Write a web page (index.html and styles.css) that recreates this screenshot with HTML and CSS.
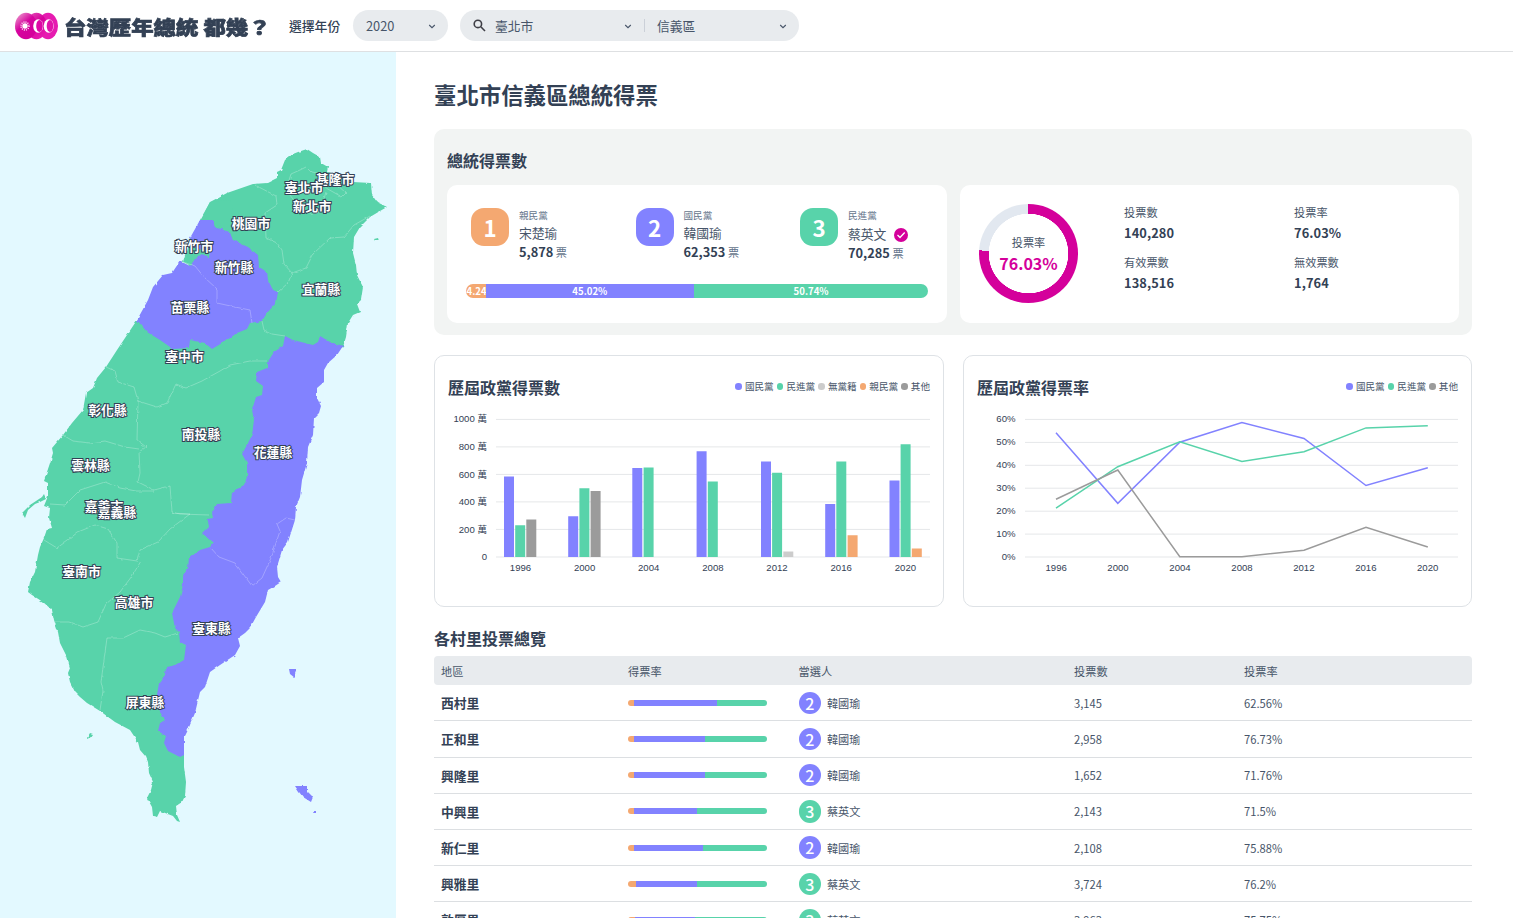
FILE: index.html
```html
<!DOCTYPE html>
<html lang="zh-Hant">
<head>
<meta charset="utf-8">
<title>台灣歷年總統 都幾？</title>
<link rel="stylesheet" href="styles.css">
</head>
<body>
<header class="topbar">
  <svg class="logo" width="44" height="28" viewBox="0 0 44 28">
    <defs>
      <linearGradient id="lg" x1="0" y1="0" x2="0.6" y2="0.8"><stop offset="0" stop-color="#f0b3d4"/><stop offset="0.6" stop-color="#d6059f"/><stop offset="1" stop-color="#d4009b"/></linearGradient>
      <linearGradient id="lg2" x1="0" y1="0" x2="0.6" y2="1"><stop offset="0" stop-color="#e55bb9"/><stop offset="0.5" stop-color="#d6009c"/><stop offset="1" stop-color="#e619ae"/></linearGradient>
    </defs>
    <ellipse cx="33" cy="14" rx="10" ry="13.2" fill="#e61bb0"/>
    <ellipse cx="21.5" cy="14" rx="10.5" ry="13.2" fill="url(#lg2)"/>
    <ellipse cx="11" cy="14" rx="11" ry="13.2" fill="url(#lg)"/>
    <circle cx="10" cy="14" r="2.7" fill="#fff"/>
    <circle cx="10" cy="14" r="4" fill="none" stroke="#fff" stroke-width="1.4" stroke-dasharray="1 1.1"/>
    <ellipse cx="23.200" cy="14" rx="5" ry="6.8" fill="#fff"/><ellipse cx="24.500" cy="14" rx="3.3" ry="6" fill="#dd0aa5"/>
    <ellipse cx="33.700" cy="14" rx="5" ry="6.800" fill="#fff"/><ellipse cx="35" cy="14" rx="3.3" ry="6" fill="#e014aa"/>
  </svg>
  <h1 class="brand">台灣歷年總統 都幾？</h1>
  <span class="year-label">選擇年份</span>
  <div class="pill pill-year"><span>2020</span><svg class="caret" width="8" height="6" viewBox="0 0 8 6"><path d="M1.2 2L4 4.700L6.800 2"/></svg></div>
  <div class="pill pill-area">
    <svg class="search" width="13" height="13" viewBox="0 0 13 13"><circle cx="4.9" cy="4.9" r="3.7"/><path d="M7.8 7.8L12 12"/></svg>
    <div class="area-field city"><span>臺北市</span><svg class="caret" width="8" height="6" viewBox="0 0 8 6"><path d="M1.2 2L4 4.700L6.800 2"/></svg></div>
    <i class="divider"></i>
    <div class="area-field district"><span>信義區</span><svg class="caret" width="8" height="6" viewBox="0 0 8 6"><path d="M1.2 2L4 4.700L6.800 2"/></svg></div>
  </div>
</header>
<div class="layout">
<aside class="map">
<svg width="396" height="866" viewBox="0 52 396 866">
  <defs><filter id="coast" x="0" y="52" width="396" height="866" filterUnits="userSpaceOnUse" color-interpolation-filters="sRGB"><feTurbulence type="fractalNoise" baseFrequency="0.2" numOctaves="1" seed="4"/><feDisplacementMap in="SourceGraphic" scale="3" xChannelSelector="R" yChannelSelector="G"/></filter></defs>
  <g filter="url(#coast)">
  <path class="dpp" d="M298 152L307 149L313 153L320 157L321 163L328 167L327 172L337 174L353 182L371 183L372 195L377 202L387 207L380 211L370 217L360 227L354 237L353 253L356 265L357 275L363 287L361 300L357 304L360 312L353 315L348 323L346 337L343 347L300 370L280 420L260 490L240 560L200 640L180 680L172 735L176 753L184 755L184 767L186 782L185 796L182 802L176 806L177 815L180 822L177 821L173 816L160 811L157 817L153 816L152 807L147 798L151 790L153 782L149 773L148 762L146 757L140 750L138 742L130 730L115 722L100 711L87 703L80 697L75 692L70 682L68 673L70 668L67 657L60 643L58 632L54 620L52 610L43 602L32 595L28 592L30 582L35 572L38 555L40 547L44 538L47 529L52 528L49 518L50 508L44 506L48 496L48 483L44 481L50 463L53 453L52 448L63 435L72 423L83 410L86 393L93 388L97 378L106 367L117 350L137 320L160 305L189 265L183 262L185 255L190 238L200 235L212 230L205 212L210 202L227 193L253 184L267 183L277 178L277 172L281 170L285 160L293 154Z"/>
  <path class="kmt" d="M137 320L148 300L153 287L163 275L172 273L180 261L188 265L190 266L195 259L202 254L209 257L210 252L195 248L190 238L200 220L213 220L215 227L230 232L233 240L248 247L258 255L259 267L267 272L268 280L273 290L278 292L276 303L267 313L262 321L250 323L247 329L237 333L227 340L212 349L205 343L190 340L189 348L173 349L160 340L147 332Z"/>
  <path class="dpp" d="M213 220L200 220L210 202L230 200L240 236L233 240L230 232L215 227Z"/>
  <path class="kmt" d="M343 346L337 355L328 363L324 370L324 382L317 388L317 398L321 406L319 413L314 418L313 435L308 447L307 463L302 480L300 497L296 507L295 520L288 542L282 550L277 567L278 577L281 582L275 586L268 590L265 602L256 617L250 628L245 633L238 638L240 646L235 655L220 665L210 672L205 687L200 692L195 713L187 732L184 738L184 755L180 757L168 751L164 743L166 736L158 731L160 723L165 720L160 712L157 695L159 683L165 675L166 667L175 665L184 660L186 645L180 642L179 632L175 628L172 613L180 597L183 585L183 575L188 568L189 558L200 550L210 547L213 543L202 533L209 526L207 519L213 518L212 513L217 504L231 503L232 492L244 485L247 477L247 463L242 454L247 445L252 435L254 420L252 410L256 397L262 395L263 386L256 381L257 372L267 368L267 363L274 352L283 346L285 336L293 340L313 345L318 342L320 336L330 342Z"/>
  <path class="dpp" d="M22 513L30 505L42 497L44 494L46 499L40 502L35 504L28 510L25 518Z"/>
  <path class="dpp" d="M374 239L378 238L379 241L375 241ZM87 738L90 733L93 734L91 737L87 739Z"/>
  <path class="kmt" d="M289 669L297 669L295 674L295 678L290 674ZM295 786L307 786L307 791L313 797L311 802L303 797L299 792ZM313 811L316 811L316 813L314 813Z"/>
  <path class="edge" d="M255 185L276 196L277 205L265 213L266 238L277 243L282 250L284 264L292 273L306 268L313 254L330 238L344 237L354 225L370 216M291 174L300 170L306 167L311 172L322 174L326 188L342 197L346 193L336 184M291 174L286 190L300 208L312 214L320 212L326 192M292 273L288 283L278 292M262 321L264 330L272 334L285 336M180 261L195 266L204 277L217 289L217 303L235 307L250 310L252 323M106 367L115 371L118 382L134 387L138 401L157 407L167 403L176 384L186 388L202 381L220 371L230 365L250 361L267 361M138 401L137 440L146 447L139 452L140 473L138 482L154 490L170 486L172 512L180 514L209 515M63 435L73 441L90 443L105 441L125 447L139 449M50 504L65 505L80 490L105 482L120 488L136 491L154 491M172 513L190 514L170 529L158 542L140 550L137 561L117 558L117 543L108 529L95 525L78 532L68 540L57 548L44 540M141 561L132 576L120 592L106 604L98 622L83 627L70 622L55 622M210 547L219 557L235 563L252 586L262 578L271 558L280 531L277 524L286 518L295 520M107 638L123 638L140 630L155 633L165 637L178 633M107 638L104 660L101 682L103 691L100 710"/>
  </g>
  <g class="map-labels">
    <text x="335" y="183.500">基隆市</text><text x="304" y="191.500">臺北市</text><text x="312" y="210.500">新北市</text><text x="251" y="227.500">桃園市</text><text x="194" y="250.500">新竹市</text><text x="234" y="271.500">新竹縣</text><text x="321" y="293.500">宜蘭縣</text><text x="190" y="311.500">苗栗縣</text><text x="184.500" y="360.500">臺中市</text><text x="107.500" y="414.500">彰化縣</text><text x="201" y="438.500">南投縣</text><text x="273" y="456.500">花蓮縣</text><text x="90.500" y="469.500">雲林縣</text><text x="104" y="510.500">嘉義市</text><text x="117" y="516.500">嘉義縣</text><text x="81.500" y="575.500">臺南市</text><text x="134" y="606.500">高雄市</text><text x="211.500" y="632.500">臺東縣</text><text x="145" y="706.500">屏東縣</text>
  </g>
</svg>
</aside>
<main class="content">
  <h2 class="page-title">臺北市信義區總統得票</h2>
  <section class="summary">
    <h3 class="section-title">總統得票數</h3>
    <div class="summary-cards">
      <div class="card votes">
        <div class="candidates">
          <div class="candidate"><b class="num tpf">1</b><div class="who"><small>親民黨</small><span class="name">宋楚瑜</span><span class="count"><b>5,878</b> 票</span></div></div>
          <div class="candidate"><b class="num blue">2</b><div class="who"><small>國民黨</small><span class="name">韓國瑜</span><span class="count"><b>62,353</b> 票</span></div></div>
          <div class="candidate"><b class="num green">3</b><div class="who"><small>民進黨</small><span class="name winner">蔡英文<svg width="14" height="14" viewBox="0 0 14 14"><circle cx="7" cy="7" r="7"/><path d="M3.5 7L6 9.500L10.700 4.500"/></svg></span><span class="count"><b>70,285</b> 票</span></div></div>
        </div>
        <div class="ratio"><span class="tpf" style="width:4.24%">4.24%</span><span class="blue" style="width:45.02%">45.02%</span><span class="green" style="width:50.74%">50.74%</span></div>
      </div>
      <div class="card turnout">
        <div class="donut"><span>投票率</span><strong>76.03%</strong></div>
        <dl class="stats">
          <div><dt>投票數</dt><dd>140,280</dd></div><div><dt>投票率</dt><dd>76.03%</dd></div>
          <div><dt>有效票數</dt><dd>138,516</dd></div><div><dt>無效票數</dt><dd>1,764</dd></div>
        </dl>
      </div>
    </div>
  </section>
  <section class="charts">
    <div class="chart-card">
      <div class="chart-head"><h3 class="section-title">歷屆政黨得票數</h3><ul class="legend"><li class="k">國民黨</li><li class="d">民進黨</li><li class="n">無黨籍</li><li class="p">親民黨</li><li class="o">其他</li></ul></div>
      <svg class="chart" width="482" height="170" viewBox="448 410 482 170">
        <path class="grid" d="M496 419.400H930M496 446.900H930M496 474.400H930M496 501.900H930M496 529.400H930M496 557H930"/>
        <g class="y"><text x="487" y="422">1000 萬</text><text x="487" y="450">800 萬</text><text x="487" y="478">600 萬</text><text x="487" y="505">400 萬</text><text x="487" y="533">200 萬</text><text x="487" y="560">0</text></g>
        <path fill="#8282ff" d="M504 476.500h10V557h-10zM568.200 516.200h10V557h-10zM632.300 468h10V557h-10zM696.600 451.200h10V557h-10zM761 461.500h10V557h-10zM825.200 504h10V557h-10zM889.500 480.500h10V557h-10z"/>
        <path fill="#58d3aa" d="M515.200 525.300h10V557h-10zM579.400 488.200h10V557h-10zM643.600 467.500h10V557h-10zM707.800 481.500h10V557h-10zM772.100 472.700h10V557h-10zM836.300 461.500h10V557h-10zM900.600 444.200h10V557h-10z"/>
        <path fill="#9b9b9b" d="M526.300 519.500h10V557h-10zM590.600 491h10V557h-10z"/>
        <path fill="#ccc" d="M783.300 551.500h10V557h-10z"/>
        <path fill="#f4a871" d="M847.600 535.200h10V557h-10zM911.800 548.400h10V557h-10z"/>
        <g class="x"><text x="520.500" y="571">1996</text><text x="584.600" y="571">2000</text><text x="648.700" y="571">2004</text><text x="712.900" y="571">2008</text><text x="777" y="571">2012</text><text x="841.200" y="571">2016</text><text x="905.400" y="571">2020</text></g>
      </svg>
    </div>
    <div class="chart-card">
      <div class="chart-head"><h3 class="section-title">歷屆政黨得票率</h3><ul class="legend"><li class="k">國民黨</li><li class="d">民進黨</li><li class="o">其他</li></ul></div>
      <svg class="chart" width="481" height="170" viewBox="977 410 481 170">
        <path class="grid" d="M1025 419.400H1458M1025 442.400H1458M1025 465.300H1458M1025 488.200H1458M1025 511.200H1458M1025 534.100H1458M1025 557H1458"/>
        <g class="y"><text x="1015.500" y="422">60%</text><text x="1015.500" y="445">50%</text><text x="1015.500" y="468">40%</text><text x="1015.500" y="491">30%</text><text x="1015.500" y="514">20%</text><text x="1015.500" y="537">10%</text><text x="1015.500" y="560">0%</text></g>
        <path class="line" stroke="#8282ff" d="M1056 432.700L1117.800 503.300L1179.800 442.200L1241.900 422.500L1304 438.400L1366 485.500L1427.800 467.800"/>
        <path class="line" stroke="#58d3aa" d="M1056 508.200L1117.800 466.700L1179.800 441.700L1241.900 461.400L1304 451.800L1366 427.900L1427.800 425.700"/>
        <path class="line" stroke="#9b9b9b" d="M1056 499.300L1117.800 470L1179.800 556.700H1241.900L1304 550.200L1366 527.200L1427.800 547"/>
        <g class="x"><text x="1056.200" y="571">1996</text><text x="1118" y="571">2000</text><text x="1180" y="571">2004</text><text x="1242" y="571">2008</text><text x="1303.800" y="571">2012</text><text x="1365.800" y="571">2016</text><text x="1427.700" y="571">2020</text></g>
      </svg>
    </div>
  </section>
  <section class="villages">
    <h3 class="section-title">各村里投票總覽</h3>
    <div class="row head"><span>地區</span><span>得票率</span><span>當選人</span><span>投票數</span><span>投票率</span></div>
    <div class="row"><b>西村里</b><div class="bar"><i class="tpf" style="width:6px"></i><i class="blue" style="width:83px"></i><i class="green"></i></div><div class="elected"><em class="blue">2</em>韓國瑜</div><span>3,145</span><span>62.56%</span></div>
    <div class="row"><b>正和里</b><div class="bar"><i class="tpf" style="width:6px"></i><i class="blue" style="width:71px"></i><i class="green"></i></div><div class="elected"><em class="blue">2</em>韓國瑜</div><span>2,958</span><span>76.73%</span></div>
    <div class="row"><b>興隆里</b><div class="bar"><i class="tpf" style="width:6px"></i><i class="blue" style="width:71px"></i><i class="green"></i></div><div class="elected"><em class="blue">2</em>韓國瑜</div><span>1,652</span><span>71.76%</span></div>
    <div class="row"><b>中興里</b><div class="bar"><i class="tpf" style="width:6px"></i><i class="blue" style="width:63px"></i><i class="green"></i></div><div class="elected"><em class="green">3</em>蔡英文</div><span>2,143</span><span>71.5%</span></div>
    <div class="row"><b>新仁里</b><div class="bar"><i class="tpf" style="width:6px"></i><i class="blue" style="width:69px"></i><i class="green"></i></div><div class="elected"><em class="blue">2</em>韓國瑜</div><span>2,108</span><span>75.88%</span></div>
    <div class="row"><b>興雅里</b><div class="bar"><i class="tpf" style="width:8px"></i><i class="blue" style="width:61px"></i><i class="green"></i></div><div class="elected"><em class="green">3</em>蔡英文</div><span>3,724</span><span>76.2%</span></div>
    <div class="row"><b>敦厚里</b><div class="bar"><i class="tpf" style="width:7px"></i><i class="blue" style="width:60px"></i><i class="green"></i></div><div class="elected"><em class="green">3</em>蔡英文</div><span>3,963</span><span>75.75%</span></div>
  </section>
</main>
</div>
</body>
</html>
```
FILE: styles.css
```css
* { box-sizing: border-box; }
html, body { margin: 0; height: 918px; overflow: hidden; }
body { font-family: "Noto Sans CJK TC", sans-serif; font-size: 12.8px; color: #334155; background: #fff; }
h1, h2, h3, ul, dl, dd { margin: 0; padding: 0; }
.topbar { height: 52px; border-bottom: 1px solid #dee0e2; display: flex; align-items: center; padding-left: 15px; }
.logo { flex: none; }
.brand { width: 230px; padding: 1px 0 0 5px; font-size: 22.4px; line-height: 30px; font-weight: 900; white-space: nowrap; transform: scaleY(.86); -webkit-text-stroke: .8px #334155; }
.year-label { width: 64px; font-weight: 500; }
.pill { height: 31px; border-radius: 16px; background: #e8ebee; display: flex; align-items: center; color: #475569; }
.pill-year { width: 95px; justify-content: space-between; padding: 0 12px 0 13px; }
.pill-area { width: 339px; margin-left: 12px; padding: 0 12px 0 13px; }
.area-field { display: flex; justify-content: space-between; align-items: center; }
.city { width: 137px; margin-left: 9px; }
.district { flex: 1; margin-left: 12px; }
.divider { width: 1px; height: 13px; background: #cbd0d8; margin-left: 12px; }
.caret path { fill: none; stroke: #475569; stroke-width: 1.1; }
.search { fill: none; stroke: #3f3f46; stroke-width: 1.6; }
.layout { display: flex; height: 866px; }
.map { width: 396px; flex: none; background: #e3f9ff; }
.map svg { display: block; }
.dpp { fill: #58d3aa; }
.kmt { fill: #8282ff; }
.edge { fill: none; stroke: #fff; stroke-opacity: .32; stroke-width: .8; }
.map-labels { font-size: 12.8px; font-weight: 700; fill: #fff; stroke: #334155; stroke-width: 2px; paint-order: stroke; text-anchor: middle; }
.content { width: 1038px; margin-left: 38px; overflow: hidden; }
.page-title { margin-top: 26px; height: 51px; font-size: 22.4px; line-height: 33px; font-weight: 700; }
.section-title { font-size: 16px; line-height: 24px; font-weight: 700; }
.summary { height: 206px; border-radius: 10px; background: #f2f4f3; padding: 19px 13px 13px; }
.summary-cards { display: flex; gap: 13px; margin-top: 13px; }
.card { flex: none; width: 500px; height: 138px; border-radius: 10px; background: #fff; }
.votes { padding: 22px 19px; }
.candidates { display: grid; grid-template-columns: 164.5px 164.5px auto; padding-left: 5px; height: 77px; }
.candidate { display: flex; gap: 9.6px; }
.num { width: 38.4px; height: 38.4px; margin-top: 1px; border-radius: 13px; color: #fff; font-size: 22.4px; line-height: 39px; text-align: center; }
.tpf { background: #f4a871; }
.blue { background: #8282ff; }
.green { background: #58d3aa; }
.who { display: flex; flex-direction: column; color: #475569; }
.who small { font-size: 9.6px; line-height: 17px; color: #64748b; }
.name { height: 18px; line-height: 18px; display: flex; align-items: center; }
.winner { height: 19px; gap: 8px; }
.winner svg { margin-top: 3px; }
.name circle { fill: #d4009b; }
.name path { fill: none; stroke: #fff; stroke-width: 1.3; }
.count { font-size: 11.2px; line-height: 19px; color: #64748b; }
.count b { font-size: 12.8px; font-weight: 700; color: #334155; }
.ratio { display: flex; height: 14px; width: 462px; border-radius: 7px; overflow: hidden; }
.ratio span { overflow: hidden; color: #fff; font-size: 9.6px; line-height: 15px; font-weight: 700; text-align: center; text-indent: .6px; }
.card.turnout { width: 499px; display: flex; }
.donut { flex: none; width: 99px; height: 99px; margin: 19px 0 0 19px; border-radius: 50%; display: flex; flex-direction: column; align-items: center; background: radial-gradient(closest-side, #fff 39.5px, transparent 40px), conic-gradient(#d4009b 76.03%, #e2e8f0 0); padding-top: 30px; }
.donut span { font-size: 11.2px; line-height: 17px; color: #475569; }
.donut strong { font-size: 16px; font-weight: 700; line-height: 24px; color: #d4009b; }
.stats { display: grid; grid-template-columns: 170px 150px; grid-auto-rows: 50px; margin: 17px 0 0 46px; }
.stats dt { font-size: 11.2px; line-height: 21px; color: #475569; }
.stats dd { font-size: 12.8px; line-height: 20px; font-weight: 700; letter-spacing: .1px; }
.charts { display: flex; gap: 19px; margin-top: 20px; }
.chart-card { width: 510px; height: 252px; border: 1px solid #dee2e6; border-radius: 10px; padding: 19px 13px 20px; }
.chart-card + .chart-card { width: 509px; }
.chart-head { display: flex; justify-content: space-between; align-items: flex-start; height: 35px; }
.legend { display: flex; gap: 3px; list-style: none; font-size: 9.6px; line-height: 23px; color: #475569; }
.legend li { display: flex; align-items: center; gap: 3.3px; }
.legend li::before { content: ""; width: 6.4px; height: 6.4px; border-radius: 50%; background: #8282ff; }
.legend .d::before { background: #58d3aa; }
.legend .n::before { background: #ccc; }
.legend .p::before { background: #f4a871; }
.legend .o::before { background: #9b9b9b; }
.chart { display: block; font-family: "Liberation Sans", "Noto Sans CJK TC", sans-serif; font-size: 9.6px; fill: #334155; }
.grid { stroke: #e5e7e9; }
.y { text-anchor: end; }
.x { text-anchor: middle; }
.line { fill: none; stroke-width: 1.5; }
.villages { margin-top: 19px; }
.villages .section-title { height: 30px; }
.row { display: grid; grid-template-columns: 187px 170.500px 275.500px 170px 1fr; align-items: center; padding: 0 7px; height: 36.2px; border-bottom: 1px solid #dcdfe2; font-size: 11.2px; color: #475569; }
.row.head { height: 29.2px; background: #e8ebee; border: 0; border-radius: 4px; }
.row b { font-size: 12.8px; font-weight: 700; color: #334155; }
.bar { display: flex; width: 139px; height: 6px; border-radius: 3px; overflow: hidden; }
.bar .green { flex: 1; }
.elected { display: flex; align-items: center; gap: 6px; }
.elected em { width: 22.4px; height: 22.4px; border-radius: 50%; color: #fff; font-style: normal; font-weight: 500; font-size: 16px; line-height: 22px; text-align: center; }
```
